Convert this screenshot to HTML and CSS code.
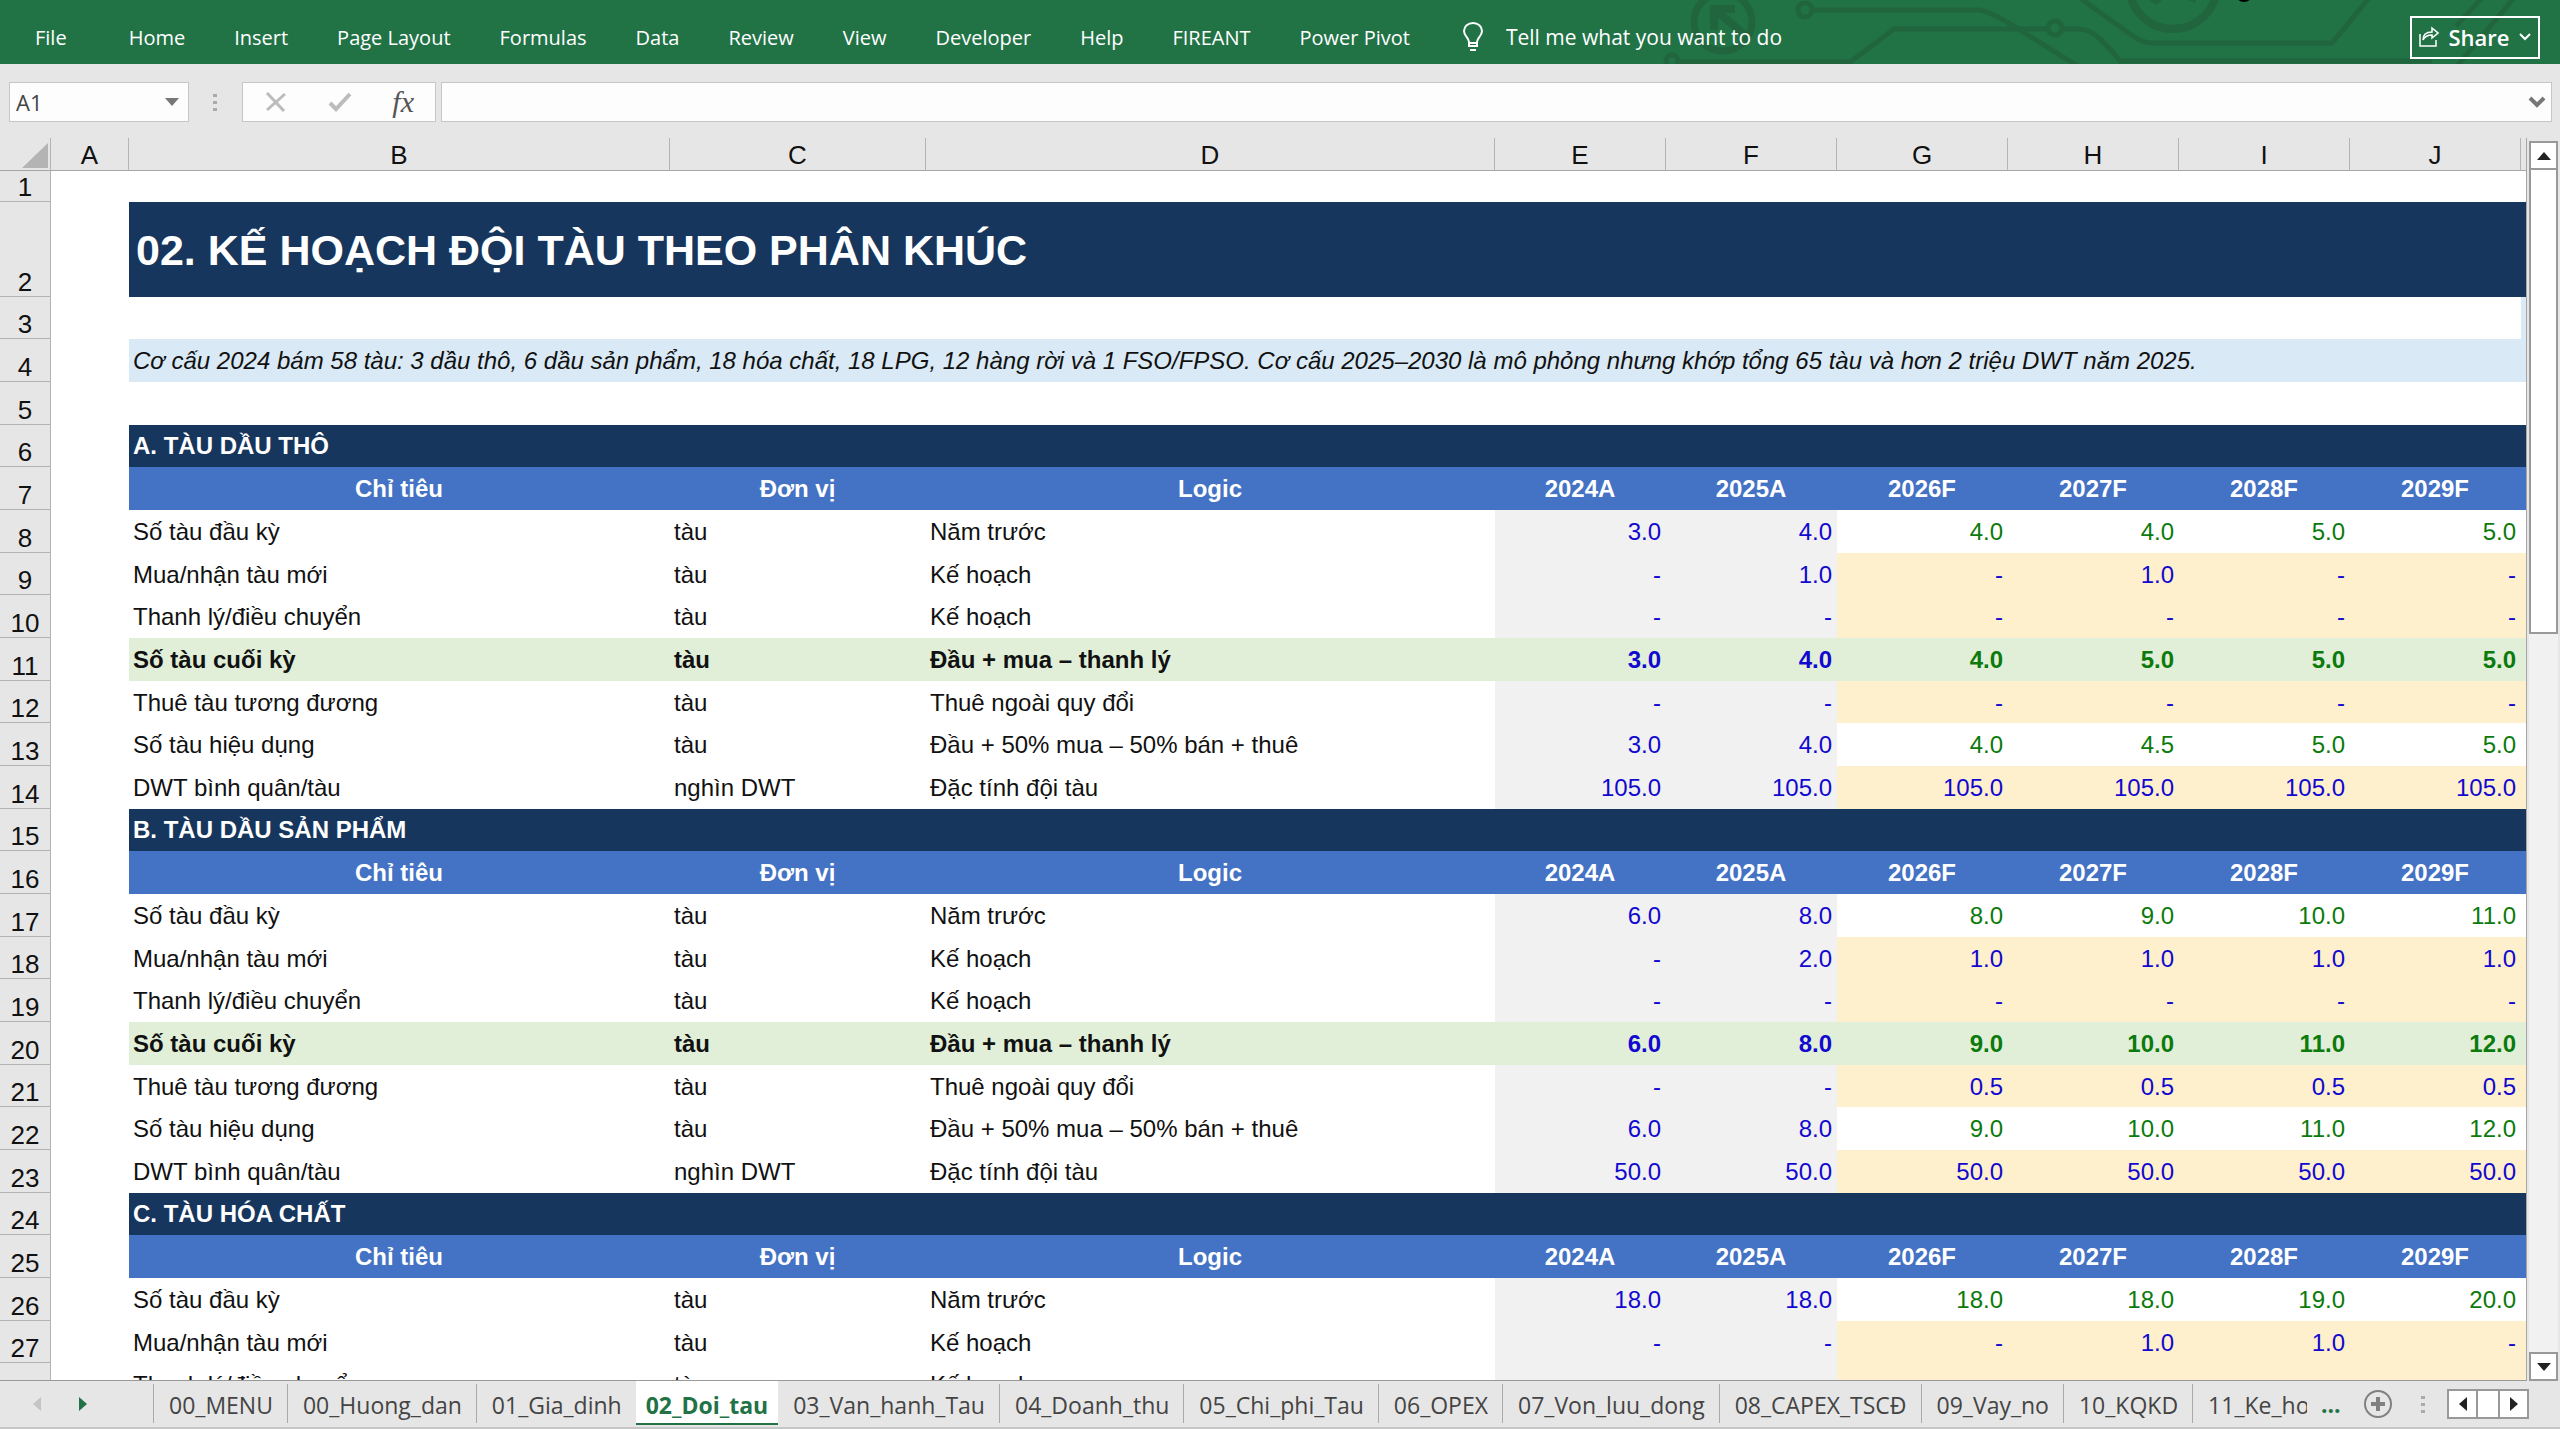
FILE: index.html
```
<!DOCTYPE html>
<html lang="vi">
<head>
    <meta charset="UTF-8">
    <meta name="viewport" content="width=device-width, initial-scale=1.0">
    <title>02_Doi_tau</title>
    <link rel="stylesheet" href="styles.css">
</head>
<body>
    <header class="ribbon">
        <svg class="circuit" width="900" height="64" viewBox="1660 0 900 64" aria-hidden="true">
            <g fill="none" stroke="#21653f" stroke-width="5">
                <circle cx="1723" cy="22" r="29" stroke-width="7"/>
                <path d="M1735 9h-21v21M1714 9l36 30" stroke-width="8"/>
                <circle cx="1672" cy="61" r="6"/>
                <path d="M1679 62h171l44-33h152M2064 29h14c14 0 24 10 42 32h312"/>
                <circle cx="2055" cy="28" r="7"/>
                <circle cx="1805" cy="10" r="7"/>
                <path d="M1813 10h167c20 4 60 34 98 56"/>
                <path d="M2080-2l50 36q12 9 22 9h180l38-46"/>
                <circle cx="2173" cy="-15" r="44" stroke-width="8"/>
                <path d="M2150-3l6 4 8-6M2186-4l10 4" stroke-width="6"/>
                <path d="M2482-2l-26 28M2514-2l-57 68"/>
            </g>
            <circle cx="2244" cy="-7" r="9" fill="#000"/>
        </svg>
        <nav>
            <ul class="menu">
                <li><a href="#" class="file">File</a></li>
                <li><a href="#">Home</a></li>
                <li><a href="#">Insert</a></li>
                <li><a href="#">Page Layout</a></li>
                <li><a href="#">Formulas</a></li>
                <li><a href="#">Data</a></li>
                <li><a href="#">Review</a></li>
                <li><a href="#">View</a></li>
                <li><a href="#">Developer</a></li>
                <li><a href="#">Help</a></li>
                <li><a href="#">FIREANT</a></li>
                <li><a href="#">Power Pivot</a></li>
            </ul>
        </nav>
        <label class="tell-me">
            <svg width="22" height="30" viewBox="0 0 22 30" fill="none" stroke="#fff" stroke-width="2" aria-hidden="true">
                <path d="M7 24v-4c0-4-5-6-5-11a9 8 0 0 1 18 0c0 5-5 7-5 11v4zM7 21h8M8 28h6"/>
            </svg>
            <input type="text" placeholder="Tell me what you want to do" aria-label="Tell me what you want to do">
        </label>
        <button class="share" type="button">
            <svg width="20" height="22" viewBox="0 0 20 22" fill="none" stroke="#fff" stroke-width="1.5" aria-hidden="true">
                <path d="M1 8v12h16v-6M4 14c0-6 4-8 9-8V2l6 5-6 5V9c-4 0-7 1-9 5z"/>
            </svg>
            Share
            <svg width="12" height="8" viewBox="0 0 12 8" fill="none" stroke="#fff" stroke-width="2" aria-hidden="true">
                <path d="M1 1l5 5 5-5"/>
            </svg>
        </button>
    </header>

    <div class="formula-bar">
        <div class="name-box">
            <input type="text" value="A1" aria-label="Name Box">
            <svg width="14" height="8" viewBox="0 0 14 8" aria-hidden="true"><path d="M0 0h14l-7 8z" fill="#777"/></svg>
        </div>
        <span class="grip"></span>
        <div class="formula-buttons">
            <button type="button" aria-label="Cancel">
                <svg width="22" height="20" viewBox="0 0 22 20" fill="none" stroke="#bcbcbc" stroke-width="3"><path d="M2 1l17 18M20 2L2 18"/></svg>
            </button>
            <button type="button" aria-label="Enter">
                <svg width="24" height="20" viewBox="0 0 24 20" fill="none" stroke="#bcbcbc" stroke-width="4"><path d="M2 11l6 6L22 2"/></svg>
            </button>
            <button type="button" class="fx" aria-label="Insert Function"><i>fx</i></button>
        </div>
        <div class="formula-input">
            <input type="text" aria-label="Formula Bar">
            <svg width="18" height="12" viewBox="0 0 18 12" fill="none" stroke="#777" stroke-width="4" aria-hidden="true"><path d="M2 2l7 7 7-7"/></svg>
        </div>
    </div>

    <main class="workspace">
        <div class="sheet">
            <table>
                <colgroup>
                    <col class="col-head">
                    <col class="col-a">
                    <col class="col-b">
                    <col class="col-c">
                    <col class="col-d">
                    <col class="col-year" span="6">
                    <col>
                </colgroup>
                <thead>
                    <tr>
                        <th class="corner"><svg width="26" height="25" viewBox="0 0 26 25" aria-hidden="true"><path d="M26 0v25H0z" fill="#b4b4b4"/></svg></th>
                        <th>A</th><th>B</th><th>C</th><th>D</th><th>E</th><th>F</th><th>G</th><th>H</th><th>I</th><th>J</th><th></th>
                    </tr>
                </thead>
                <tbody>
                    <tr class="first"><th>1</th><td colspan="11"></td></tr>
                    <tr class="title"><th>2</th><td></td><td colspan="10">02. KẾ HOẠCH ĐỘI TÀU THEO PHÂN KHÚC</td></tr>
                    <tr><th>3</th><td colspan="10"></td><td class="note-bg"></td></tr>
                    <tr class="note"><th>4</th><td></td><td colspan="10">Cơ cấu 2024 bám 58 tàu: 3 dầu thô, 6 dầu sản phẩm, 18 hóa chất, 18 LPG, 12 hàng rời và 1 FSO/FPSO. Cơ cấu 2025–2030 là mô phỏng nhưng khớp tổng 65 tàu và hơn 2 triệu DWT năm 2025.</td></tr>
                    <tr><th>5</th><td colspan="11"></td></tr>

                    <!-- A. Crude tankers -->
                    <tr class="section"><th>6</th><td></td><td colspan="10">A. TÀU DẦU THÔ</td></tr>
                    <tr class="heading"><th>7</th><td></td><td>Chỉ tiêu</td><td>Đơn vị</td><td>Logic</td><td>2024A</td><td>2025A</td><td>2026F</td><td>2027F</td><td>2028F</td><td>2029F</td><td></td></tr>
                    <tr class="data calc"><th>8</th><td></td><td>Số tàu đầu kỳ</td><td>tàu</td><td>Năm trước</td><td>3.0</td><td>4.0</td><td>4.0</td><td>4.0</td><td>5.0</td><td>5.0</td><td></td></tr>
                    <tr class="data plan"><th>9</th><td></td><td>Mua/nhận tàu mới</td><td>tàu</td><td>Kế hoạch</td><td>-</td><td>1.0</td><td>-</td><td>1.0</td><td>-</td><td>-</td><td></td></tr>
                    <tr class="data plan"><th>10</th><td></td><td>Thanh lý/điều chuyển</td><td>tàu</td><td>Kế hoạch</td><td>-</td><td>-</td><td>-</td><td>-</td><td>-</td><td>-</td><td></td></tr>
                    <tr class="data calc total"><th>11</th><td></td><td>Số tàu cuối kỳ</td><td>tàu</td><td>Đầu + mua – thanh lý</td><td>3.0</td><td>4.0</td><td>4.0</td><td>5.0</td><td>5.0</td><td>5.0</td><td></td></tr>
                    <tr class="data plan"><th>12</th><td></td><td>Thuê tàu tương đương</td><td>tàu</td><td>Thuê ngoài quy đổi</td><td>-</td><td>-</td><td>-</td><td>-</td><td>-</td><td>-</td><td></td></tr>
                    <tr class="data calc"><th>13</th><td></td><td>Số tàu hiệu dụng</td><td>tàu</td><td>Đầu + 50% mua – 50% bán + thuê</td><td>3.0</td><td>4.0</td><td>4.0</td><td>4.5</td><td>5.0</td><td>5.0</td><td></td></tr>
                    <tr class="data plan"><th>14</th><td></td><td>DWT bình quân/tàu</td><td>nghìn DWT</td><td>Đặc tính đội tàu</td><td>105.0</td><td>105.0</td><td>105.0</td><td>105.0</td><td>105.0</td><td>105.0</td><td></td></tr>

                    <!-- B. Product tankers -->
                    <tr class="section"><th>15</th><td></td><td colspan="10">B. TÀU DẦU SẢN PHẨM</td></tr>
                    <tr class="heading"><th>16</th><td></td><td>Chỉ tiêu</td><td>Đơn vị</td><td>Logic</td><td>2024A</td><td>2025A</td><td>2026F</td><td>2027F</td><td>2028F</td><td>2029F</td><td></td></tr>
                    <tr class="data calc"><th>17</th><td></td><td>Số tàu đầu kỳ</td><td>tàu</td><td>Năm trước</td><td>6.0</td><td>8.0</td><td>8.0</td><td>9.0</td><td>10.0</td><td>11.0</td><td></td></tr>
                    <tr class="data plan"><th>18</th><td></td><td>Mua/nhận tàu mới</td><td>tàu</td><td>Kế hoạch</td><td>-</td><td>2.0</td><td>1.0</td><td>1.0</td><td>1.0</td><td>1.0</td><td></td></tr>
                    <tr class="data plan"><th>19</th><td></td><td>Thanh lý/điều chuyển</td><td>tàu</td><td>Kế hoạch</td><td>-</td><td>-</td><td>-</td><td>-</td><td>-</td><td>-</td><td></td></tr>
                    <tr class="data calc total"><th>20</th><td></td><td>Số tàu cuối kỳ</td><td>tàu</td><td>Đầu + mua – thanh lý</td><td>6.0</td><td>8.0</td><td>9.0</td><td>10.0</td><td>11.0</td><td>12.0</td><td></td></tr>
                    <tr class="data plan"><th>21</th><td></td><td>Thuê tàu tương đương</td><td>tàu</td><td>Thuê ngoài quy đổi</td><td>-</td><td>-</td><td>0.5</td><td>0.5</td><td>0.5</td><td>0.5</td><td></td></tr>
                    <tr class="data calc"><th>22</th><td></td><td>Số tàu hiệu dụng</td><td>tàu</td><td>Đầu + 50% mua – 50% bán + thuê</td><td>6.0</td><td>8.0</td><td>9.0</td><td>10.0</td><td>11.0</td><td>12.0</td><td></td></tr>
                    <tr class="data plan"><th>23</th><td></td><td>DWT bình quân/tàu</td><td>nghìn DWT</td><td>Đặc tính đội tàu</td><td>50.0</td><td>50.0</td><td>50.0</td><td>50.0</td><td>50.0</td><td>50.0</td><td></td></tr>

                    <!-- C. Chemical tankers -->
                    <tr class="section"><th>24</th><td></td><td colspan="10">C. TÀU HÓA CHẤT</td></tr>
                    <tr class="heading"><th>25</th><td></td><td>Chỉ tiêu</td><td>Đơn vị</td><td>Logic</td><td>2024A</td><td>2025A</td><td>2026F</td><td>2027F</td><td>2028F</td><td>2029F</td><td></td></tr>
                    <tr class="data calc"><th>26</th><td></td><td>Số tàu đầu kỳ</td><td>tàu</td><td>Năm trước</td><td>18.0</td><td>18.0</td><td>18.0</td><td>18.0</td><td>19.0</td><td>20.0</td><td></td></tr>
                    <tr class="data plan"><th>27</th><td></td><td>Mua/nhận tàu mới</td><td>tàu</td><td>Kế hoạch</td><td>-</td><td>-</td><td>-</td><td>1.0</td><td>1.0</td><td>-</td><td></td></tr>
                    <tr class="data plan"><th></th><td></td><td>Thanh lý/điều chuyển</td><td>tàu</td><td>Kế hoạch</td><td></td><td></td><td></td><td></td><td></td><td></td><td></td></tr>
                </tbody>
            </table>
        </div>
        <div class="scroll-y">
            <button type="button" aria-label="Scroll up"><svg width="14" height="8" viewBox="0 0 14 8"><path d="M7 0l7 8H0z" fill="#222"/></svg></button>
            <div class="track"><div class="thumb"></div></div>
            <button type="button" aria-label="Scroll down"><svg width="14" height="8" viewBox="0 0 14 8"><path d="M0 0h14l-7 8z" fill="#222"/></svg></button>
        </div>
    </main>

    <footer class="tab-bar">
        <div class="tab-nav">
            <button type="button" aria-label="Previous sheet"><svg width="8" height="14" viewBox="0 0 8 14"><path d="M8 0v14L0 7z" fill="#c4c4c4"/></svg></button>
            <button type="button" aria-label="Next sheet"><svg width="8" height="14" viewBox="0 0 8 14"><path d="M0 0v14l8-7z" fill="#217346"/></svg></button>
        </div>
        <ul class="tabs">
            <li><a href="#">00_MENU</a></li>
            <li><a href="#">00_Huong_dan</a></li>
            <li><a href="#">01_Gia_dinh</a></li>
            <li class="active"><a href="#">02_Doi_tau</a></li>
            <li><a href="#">03_Van_hanh_Tau</a></li>
            <li><a href="#">04_Doanh_thu</a></li>
            <li><a href="#">05_Chi_phi_Tau</a></li>
            <li><a href="#">06_OPEX</a></li>
            <li><a href="#">07_Von_luu_dong</a></li>
            <li><a href="#">08_CAPEX_TSCĐ</a></li>
            <li><a href="#">09_Vay_no</a></li>
            <li><a href="#">10_KQKD</a></li>
            <li class="last"><a href="#">11_Ke_ho</a></li>
        </ul>
        <button type="button" class="more" aria-label="More sheets">...</button>
        <button type="button" class="add" aria-label="New sheet"><svg width="30" height="30" viewBox="0 0 30 30" fill="none" stroke="#808080"><circle cx="15" cy="15" r="13" stroke-width="2"/><path d="M15 8v14M8 15h14" stroke-width="4"/></svg></button>
        <span class="grip"></span>
        <div class="scroll-x">
            <button type="button" aria-label="Scroll left"><svg width="8" height="14" viewBox="0 0 8 14"><path d="M8 0v14L0 7z" fill="#222"/></svg></button>
            <div class="thumb"></div>
            <button type="button" aria-label="Scroll right"><svg width="8" height="14" viewBox="0 0 8 14"><path d="M0 0v14l8-7z" fill="#222"/></svg></button>
        </div>
    </footer>
</body>
</html>
```
FILE: styles.css
```
/* Global Styles */
* {
    box-sizing: border-box;
}

body {
    font-family: "Open Sans", "Noto Sans", sans-serif;
    margin: 0;
    height: 100vh;
    display: flex;
    flex-direction: column;
    background-color: #e6e6e6;
    overflow: hidden;
}

a {
    text-decoration: none;
    color: inherit;
}

ul {
    list-style-type: none;
    margin: 0;
    padding: 0;
}

button {
    display: flex;
    align-items: center;
    justify-content: center;
    padding: 0;
    border: none;
    background: none;
    font-family: inherit;
    cursor: pointer;
}

input {
    border: none;
    outline: none;
    padding: 0;
    background: none;
    font-family: inherit;
}

svg {
    display: block;
    flex: none;
}

/* Ribbon */
.ribbon {
    position: relative;
    display: flex;
    align-items: center;
    height: 64px;
    padding: 10px 20px 0 35px;
    background-color: #217346;
    color: white;
    font-size: 20px;
}

.circuit {
    position: absolute;
    top: 0;
    right: 0;
}

.ribbon nav,
.tell-me,
.share {
    position: relative;
}

.menu {
    display: flex;
    gap: 49px;
}

.menu .file {
    margin-right: 13px;
}

.tell-me {
    display: flex;
    align-items: center;
    gap: 22px;
    margin-left: 52px;
}

.tell-me input {
    width: 300px;
    color: white;
    font-size: 21px;
}

.tell-me input::placeholder {
    color: white;
    opacity: 1;
}

.share {
    gap: 9px;
    width: 130px;
    height: 43px;
    margin-left: auto;
    border: 2px solid white;
    color: white;
    font-size: 22px;
    font-weight: 600;
}

/* Formula Bar */
.formula-bar {
    display: flex;
    align-items: center;
    height: 74px;
    padding: 2px 8px 0 9px;
}

.name-box,
.formula-buttons,
.formula-input {
    display: flex;
    align-items: center;
    height: 40px;
    background-color: #fdfdfd;
    border: 1px solid #c6c6c6;
}

.name-box {
    width: 180px;
    padding: 0 9px 0 6px;
}

.name-box input {
    flex: 1;
    min-width: 0;
    color: #444;
    font-size: 22px;
}

.grip {
    width: 4px;
    height: 20px;
    background: radial-gradient(circle, #aaa 2px, transparent 2px) 0 0 / 4px 7px;
}

.formula-bar .grip {
    margin: 0 25px 0 24px;
}

.formula-buttons {
    width: 194px;
    padding: 0 21px 0 22px;
    margin-right: 5px;
    justify-content: space-between;
}

.fx {
    color: #555;
    font-family: "Liberation Serif", serif;
    font-size: 30px;
}

.formula-input {
    flex: 1;
    padding-right: 5px;
}

.formula-input input {
    flex: 1;
    font-size: 22px;
}

/* Sheet */
.workspace {
    flex: 1;
    min-height: 0;
    display: flex;
}

.sheet {
    flex: 1;
    min-width: 0;
    overflow: hidden;
    border-right: 1px solid #a6a6a6;
    border-bottom: 1px solid #999;
    background-color: white;
}

table {
    width: 100%;
    table-layout: fixed;
    border-collapse: separate;
    border-spacing: 0;
    font-family: "Liberation Sans", Arial, sans-serif;
    font-size: 24px;
    line-height: 28px;
    color: #111;
}

.col-head { width: 51px; }
.col-a { width: 78px; }
.col-b { width: 541px; }
.col-c { width: 256px; }
.col-d { width: 569px; }
.col-year { width: 171px; }

th {
    padding: 0;
    background-color: #e6e6e6;
    font-size: 26px;
    font-weight: normal;
    border-right: 1px solid #b4b4b4;
    border-bottom: 1px solid #b4b4b4;
}

thead th {
    height: 33px;
    padding-top: 2px;
    vertical-align: middle;
    border-bottom: 1px solid #a6a6a6;
}

thead th:last-child {
    border-right: none;
}

thead .corner svg {
    margin-left: 22px;
}

tbody th {
    vertical-align: bottom;
}

td {
    padding: 0 5px 0 4px;
    vertical-align: middle;
    white-space: nowrap;
    overflow: hidden;
}

tbody tr {
    height: 43px;
}

tbody tr:nth-child(3n) {
    height: 42px;
}

tbody .first {
    height: 31px;
}

tbody .title {
    height: 95px;
}

.title td:nth-child(n+3),
.section td:nth-child(n+3) {
    background-color: #17365d;
    color: white;
    font-weight: bold;
}

.title td {
    padding-left: 7px;
    font-size: 43px;
    line-height: 56px;
}

.note td:nth-child(n+3),
.note-bg {
    background-color: #d9e9f5;
    font-style: italic;
}

.heading td:nth-child(n+3) {
    background-color: #4472c4;
    color: white;
    font-weight: bold;
    text-align: center;
}

/* Figures: columns E-F are actuals, G onwards forecasts */
.data td {
    padding-top: 1px;
}

.data td:nth-child(n+6) {
    color: #1208d0;
    text-align: right;
}

.data td:nth-child(6),
.data td:nth-child(7) {
    background-color: #f1f1f1;
}

.calc td:nth-child(n+8) {
    color: #0c7a0c;
}

.plan td:nth-child(n+8) {
    background-color: #fef0cd;
}

.total td {
    font-weight: bold;
}

.total td:nth-child(n+3) {
    background-color: #e1efd9;
}

/* Scroll Bars */
.scroll-y {
    display: flex;
    flex-direction: column;
    width: 33px;
    padding: 3px 2px 0 2px;
}

.scroll-y button {
    height: 29px;
    background-color: white;
    border: 2px solid #999;
}

.track {
    flex: 1;
    background-color: #f1f1f1;
}

.track .thumb {
    height: 464px;
    background-color: white;
    border: 2px solid #999;
    border-top: none;
}

.scroll-x {
    display: flex;
    height: 30px;
    margin-left: 22px;
    border: 2px solid #999;
    background-color: white;
}

.scroll-x button {
    width: 27px;
}

.scroll-x .thumb {
    width: 24px;
    border: solid #999;
    border-width: 0 2px;
}

/* Sheet Tabs */
.tab-bar {
    display: flex;
    align-items: center;
    height: 48px;
    padding: 0 31px 1px 33px;
    border-bottom: 2px solid #c6c6c6;
}

.tab-nav {
    display: flex;
    gap: 38px;
    width: 120px;
}

.tabs {
    flex: 1;
    min-width: 0;
    align-self: stretch;
    display: flex;
    align-items: center;
    overflow: hidden;
    color: #444;
    font-size: 23px;
    line-height: 35px;
}

.tabs li {
    padding: 4px 14px 0 15px;
    border-left: 1px solid #aaa;
    white-space: nowrap;
}

.tabs .active {
    align-self: flex-start;
    padding: 7px 10px 0 10px;
    border-left: none;
    border-bottom: 2px solid #217346;
    background-color: white;
    color: #217346;
    font-weight: bold;
}

.tabs .active + li {
    border-left: none;
}

.tabs .last {
    padding-right: 0;
}

.more {
    width: 56px;
    padding-left: 14px;
    justify-content: flex-start;
    color: #217346;
    font-size: 23px;
    font-weight: bold;
}

.tab-bar .add {
    margin-right: 28px;
}
```
